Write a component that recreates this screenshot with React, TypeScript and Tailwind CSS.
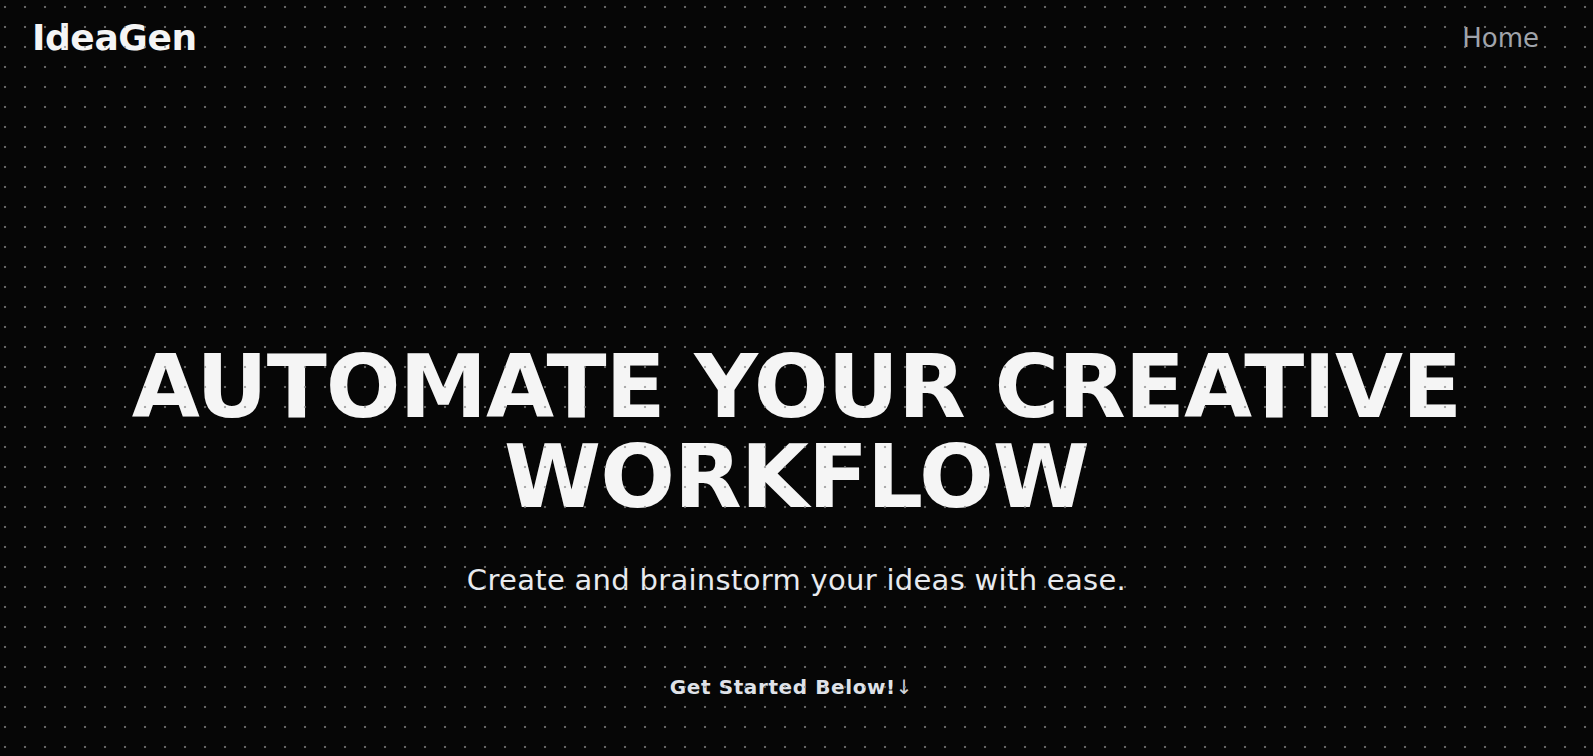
import React from "react";

export default function App() {
  return (
    <div
      className="relative min-h-screen w-full overflow-hidden bg-[#060606]"
      style={{ fontFamily: '"DejaVu Sans", "Liberation Sans", sans-serif' }}
    >
      <header className="flex h-[76px] items-start justify-between pl-[32px] pr-[54px]">
        <div className="pt-[18px] text-[36px] font-bold leading-[40px] tracking-[-0.4px] text-[#f5f5f5]">
          IdeaGen
        </div>
        <nav className="pt-[22px]">
          <a className="text-[26px] leading-[32px] text-[#a0a4ab]">Home</a>
        </nav>
      </header>

      <main className="flex flex-col items-center pt-[266px] text-center">
        <h1 className="text-[88px] font-bold leading-[90px] tracking-[-1px] text-[#f5f5f5]">
          AUTOMATE YOUR CREATIVE
          <br />
          WORKFLOW
        </h1>
        <p className="mt-[36px] text-[29px] font-normal leading-[44px] tracking-[0.3px] text-[#e8eaee]">
          Create and brainstorm your ideas with ease.
        </p>
        <button className="mr-[10px] mt-[71px] text-[20px] font-bold leading-[28px] tracking-[0.6px] text-[#dfe2e8]">
          Get Started Below!
          <span className="font-normal text-[#d0d3d8]">↓</span>
        </button>
      </main>

      <div className="pointer-events-none absolute inset-0 z-10 bg-[radial-gradient(circle,rgba(140,140,140,0.7)_1.1px,transparent_1.6px)] bg-[size:20px_20px] bg-[position:-5px_-3px]" />
    </div>
  );
}
